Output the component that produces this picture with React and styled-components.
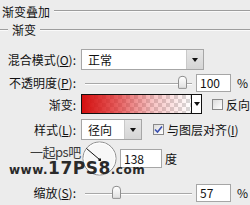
import React from "react";
import styled, { createGlobalStyle } from "styled-components";

const GlobalStyle = createGlobalStyle`
  html, body {
    margin: 0;
    padding: 0;
    background: #ececec;
  }
  body {
    font-family: "Noto Sans CJK SC", "Liberation Sans", sans-serif;
    font-size: 12px;
    color: #111;
  }
`;

function App() {
  return (
    <Panel>
      <GlobalStyle />
      <TitleBar>
        <Title>渐变叠加</Title>
        <Rule />
      </TitleBar>
      <GroupBar>
        <LeadRule />
        <GroupTitle>渐变</GroupTitle>
        <Rule />
      </GroupBar>

      <Row $h={21} $top={12}>
        <Label>混合模式(<u>O</u>):</Label>
        <Select $w={123}>
          <SelectText>正常</SelectText>
          <ArrowButton><Arrow /></ArrowButton>
        </Select>
      </Row>

      <Row $h={17} $top={4}>
        <Label>不透明度(<u>P</u>):</Label>
        <Slider $w={107}>
          <Track />
          <Thumb $left={93} />
        </Slider>
        <NumberBox>100</NumberBox>
        <Unit>%</Unit>
      </Row>

      <Row $h={20} $top={3}>
        <Label>渐变:</Label>
        <GradientPicker>
          <GradientBar />
          <GradientArrow><Arrow /></GradientArrow>
        </GradientPicker>
        <Check $gap={10} />
        <CheckText>反向</CheckText>
      </Row>

      <Row $h={21} $top={5}>
        <Label>样式(<u>L</u>):</Label>
        <Select $w={61}>
          <SelectText>径向</SelectText>
          <ArrowButton><Arrow /></ArrowButton>
        </Select>
        <Check $gap={11} $checked>
          <svg width="9" height="9" viewBox="0 0 9 9">
            <path d="M1 4.5 L3.5 7 L8 1.5" stroke="#3a4fb0" strokeWidth="1.6" fill="none" />
          </svg>
        </Check>
        <CheckText>与图层对齐(<u>I</u>)</CheckText>
      </Row>

      <Row $h={33} $top={2}>
        <Label />
        <Dial>
          <svg width="35" height="35" viewBox="0 0 35 35">
            <circle cx="17.5" cy="17.5" r="16.5" fill="#f7f7f7" stroke="#8c8c8c" strokeWidth="1" />
            <circle cx="17.5" cy="17.5" r="15.5" fill="none" stroke="#fff" strokeWidth="1" />
            <line x1="17.5" y1="18.5" x2="4.5" y2="7.5" stroke="#111" strokeWidth="1" />
            <rect x="16.5" y="17.5" width="2.5" height="2.5" fill="#111" />
          </svg>
        </Dial>
        <NumberBox $w={42} $h={19} $gap={3}>138</NumberBox>
        <Unit $gap={3}>度</Unit>
        <Watermark>
          <WmTop>一起ps吧</WmTop>
          <WmBottom>
            <small>www.</small>17PS8<small>.com</small>
          </WmBottom>
        </Watermark>
      </Row>

      <Row $h={19} $top={8}>
        <Label>缩放(<u>S</u>):</Label>
        <Slider $w={107}>
          <Track />
          <Thumb $left={27} />
        </Slider>
        <NumberBox>57</NumberBox>
        <Unit>%</Unit>
      </Row>
    </Panel>
  );
}

const Panel = styled.div`
  width: 250px;
  height: 205px;
  overflow: hidden;
  position: relative;
  background: #ececec;
`;

const TitleBar = styled.div`
  display: flex;
  align-items: center;
  height: 22px;
  padding-left: 2px;
`;

const Title = styled.span`
  font-size: 12px;
  line-height: 12px;
  margin-right: 4px;
  padding-top: 1px;
`;

const Rule = styled.div`
  flex: 1;
  height: 0;
  border-top: 1px solid #9d9d9d;
  border-bottom: 1px solid #fafafa;
`;

const LeadRule = styled(Rule)`
  flex: 0 0 8px;
`;

const GroupBar = styled.div`
  display: flex;
  align-items: center;
  height: 15px;
`;

const GroupTitle = styled.span`
  font-size: 12px;
  line-height: 12px;
  padding: 0 4px;
`;

const Row = styled.div`
  display: flex;
  align-items: center;
  height: ${(p) => p.$h}px;
  margin-top: ${(p) => p.$top}px;
  position: relative;
`;

const Label = styled.div`
  width: 76px;
  flex: none;
  text-align: right;
  padding-right: 5px;
  box-sizing: content-box;
  white-space: nowrap;
  u {
    text-decoration: underline;
  }
`;

const Select = styled.div`
  display: flex;
  width: ${(p) => p.$w}px;
  height: 100%;
  box-sizing: border-box;
  border: 1px solid #a6a6a6;
  background: #fff;
`;

const SelectText = styled.div`
  flex: 1;
  padding-left: 6px;
  display: flex;
  align-items: center;
`;

const ArrowButton = styled.div`
  width: 16px;
  display: flex;
  align-items: center;
  justify-content: center;
  border-left: 1px solid #c9c9c9;
  background: linear-gradient(#e6e6e6, #d5d5d5);
`;

const Arrow = styled.div`
  width: 0;
  height: 0;
  border-left: 3px solid transparent;
  border-right: 3px solid transparent;
  border-top: 4px solid #111;
`;

const Slider = styled.div`
  position: relative;
  width: ${(p) => p.$w}px;
  height: 100%;
  margin-left: 4px;
`;

const Track = styled.div`
  position: absolute;
  left: 0;
  right: 0;
  top: 50%;
  border-top: 1px solid #a8a8a8;
  border-bottom: 1px solid #fff;
`;

const Thumb = styled.div`
  position: absolute;
  left: ${(p) => p.$left}px;
  top: 50%;
  transform: translateY(-55%);
  width: 7px;
  height: 11px;
  border: 1px solid #8f8f8f;
  border-radius: 4px 4px 1px 1px;
  background: linear-gradient(#fff, #e0e0e0);
`;

const NumberBox = styled.div`
  width: ${(p) => p.$w || 35}px;
  height: ${(p) => p.$h || 18}px;
  margin-left: ${(p) => p.$gap ?? 4}px;
  box-sizing: border-box;
  border: 1px solid #a6a6a6;
  background: #fff;
  padding-left: 3px;
  display: flex;
  align-items: center;
`;

const Unit = styled.span`
  margin-left: ${(p) => p.$gap ?? 6}px;
`;

const GradientPicker = styled.div`
  display: flex;
  width: 122px;
  height: 100%;
  box-sizing: border-box;
  border: 1px solid #111;
  background: #fff;
`;

const GradientBar = styled.div`
  flex: 1;
  border-right: 1px solid #111;
  background:
    linear-gradient(90deg, #d40f0f 0%, rgba(220, 30, 30, 0.75) 30%, rgba(230, 60, 60, 0.3) 65%, rgba(255, 255, 255, 0) 100%),
    repeating-conic-gradient(#d8d8d8 0 25%, #ffffff 0 50%) 0 0 / 8px 8px;
`;

const GradientArrow = styled.div`
  width: 9px;
  display: flex;
  align-items: center;
  justify-content: center;
  background: #fff;
`;

const Check = styled.div`
  width: 11px;
  height: 11px;
  margin-left: ${(p) => p.$gap}px;
  margin-right: 3px;
  box-sizing: border-box;
  border: 1px solid #8a8a8a;
  background: linear-gradient(135deg, #dcdcdc, #fff);
  display: flex;
  align-items: center;
  justify-content: center;
`;

const CheckText = styled.span`
  white-space: nowrap;
  u {
    text-decoration: underline;
  }
`;

const Dial = styled.div`
  width: 35px;
  height: 35px;
  margin-left: 1px;
  display: flex;
`;

const Watermark = styled.div`
  position: absolute;
  left: 9px;
  top: 3px;
  display: flex;
  flex-direction: column;
  align-items: flex-start;
  pointer-events: none;
`;

const WmTop = styled.div`
  margin-left: 21px;
  font-size: 13px;
  line-height: 14px;
  height: 14px;
  color: #3b3b3b;
  letter-spacing: -0.5px;
`;

const WmBottom = styled.div`
  margin-top: 3px;
  font-family: "DejaVu Sans", sans-serif;
  font-weight: bold;
  font-size: 17px;
  line-height: 12px;
  height: 12px;
  color: #2a2a2a;
  letter-spacing: 0.5px;
  small {
    font-size: 12px;
  }
`;

export default App;
